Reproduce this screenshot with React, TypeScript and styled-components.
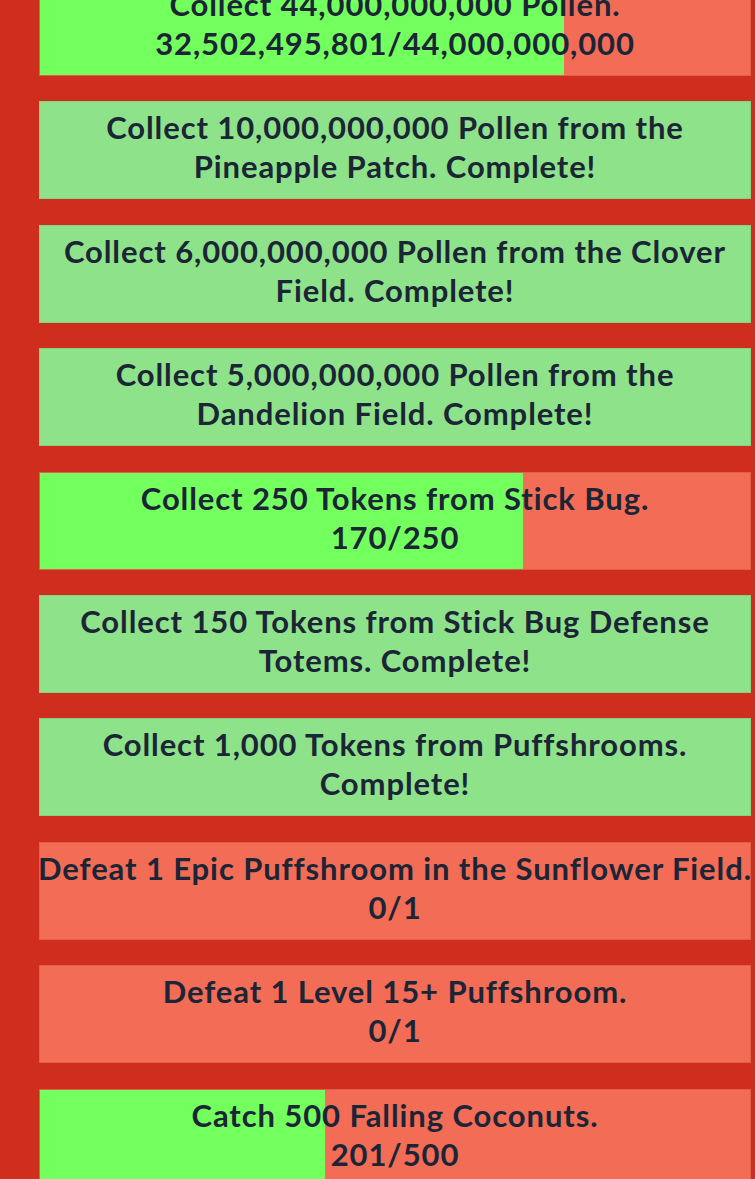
import React from "react";
import styled, { createGlobalStyle } from "styled-components";

const GlobalStyle = createGlobalStyle`
  html, body {
    margin: 0;
    padding: 0;
    background-color: #cf2d1e;
    overflow: hidden;
  }
`;

const Page = styled.div`
  width: 755px;
  height: 1179px;
  overflow: hidden;
  background-color: #cf2d1e;
  box-sizing: border-box;
  padding-left: 39px;
  padding-right: 4px;
`;

const QuestList = styled.div`
  display: flex;
  flex-direction: column;
  gap: 25.4px;
  margin-top: -22px;
`;

const QuestCard = styled.div<{ $complete?: boolean }>`
  position: relative;
  height: 98px;
  box-sizing: border-box;
  border: 1px solid ${(p) => (p.$complete ? "#84d47f" : "#e35f49")};
  background-color: ${(p) => (p.$complete ? "#8ee28a" : "#f26c56")};
  display: flex;
  align-items: center;
  justify-content: center;
  overflow: hidden;
`;

const ProgressFill = styled.div`
  position: absolute;
  left: 0;
  top: 0;
  bottom: 0;
  background-color: #73ff5e;
`;

const QuestText = styled.div`
  position: relative;
  margin-top: -6px;
  font-family: Lato, "Liberation Sans", sans-serif;
  font-weight: 700;
  font-size: 31px;
  letter-spacing: 0.9px;
  line-height: 39px;
  color: #1b2536;
  text-align: center;
  white-space: nowrap;
`;

const Line = styled.div``;

interface Quest {
  lines: string[];
  complete?: boolean;
  progress?: number;
}

const quests: Quest[] = [
  {
    lines: ["Collect 44,000,000,000 Pollen.", "32,502,495,801/44,000,000,000"],
    progress: 32502495801 / 44000000000,
  },
  {
    lines: ["Collect 10,000,000,000 Pollen from the", "Pineapple Patch. Complete!"],
    complete: true,
  },
  {
    lines: ["Collect 6,000,000,000 Pollen from the Clover", "Field. Complete!"],
    complete: true,
  },
  {
    lines: ["Collect 5,000,000,000 Pollen from the", "Dandelion Field. Complete!"],
    complete: true,
  },
  {
    lines: ["Collect 250 Tokens from Stick Bug.", "170/250"],
    progress: 170 / 250,
  },
  {
    lines: ["Collect 150 Tokens from Stick Bug Defense", "Totems. Complete!"],
    complete: true,
  },
  {
    lines: ["Collect 1,000 Tokens from Puffshrooms.", "Complete!"],
    complete: true,
  },
  {
    lines: ["Defeat 1 Epic Puffshroom in the Sunflower Field.", "0/1"],
    progress: 0,
  },
  {
    lines: ["Defeat 1 Level 15+ Puffshroom.", "0/1"],
    progress: 0,
  },
  {
    lines: ["Catch 500 Falling Coconuts.", "201/500"],
    progress: 201 / 500,
  },
];

export default function App() {
  return (
    <>
      <GlobalStyle />
      <Page>
        <QuestList>
          {quests.map((q, i) => (
            <QuestCard key={i} $complete={q.complete}>
              {!q.complete && q.progress ? (
                <ProgressFill style={{ width: `${q.progress * 100}%` }} />
              ) : null}
              <QuestText>
                {q.lines.map((l, j) => (
                  <Line key={j}>{l}</Line>
                ))}
              </QuestText>
            </QuestCard>
          ))}
        </QuestList>
      </Page>
    </>
  );
}
